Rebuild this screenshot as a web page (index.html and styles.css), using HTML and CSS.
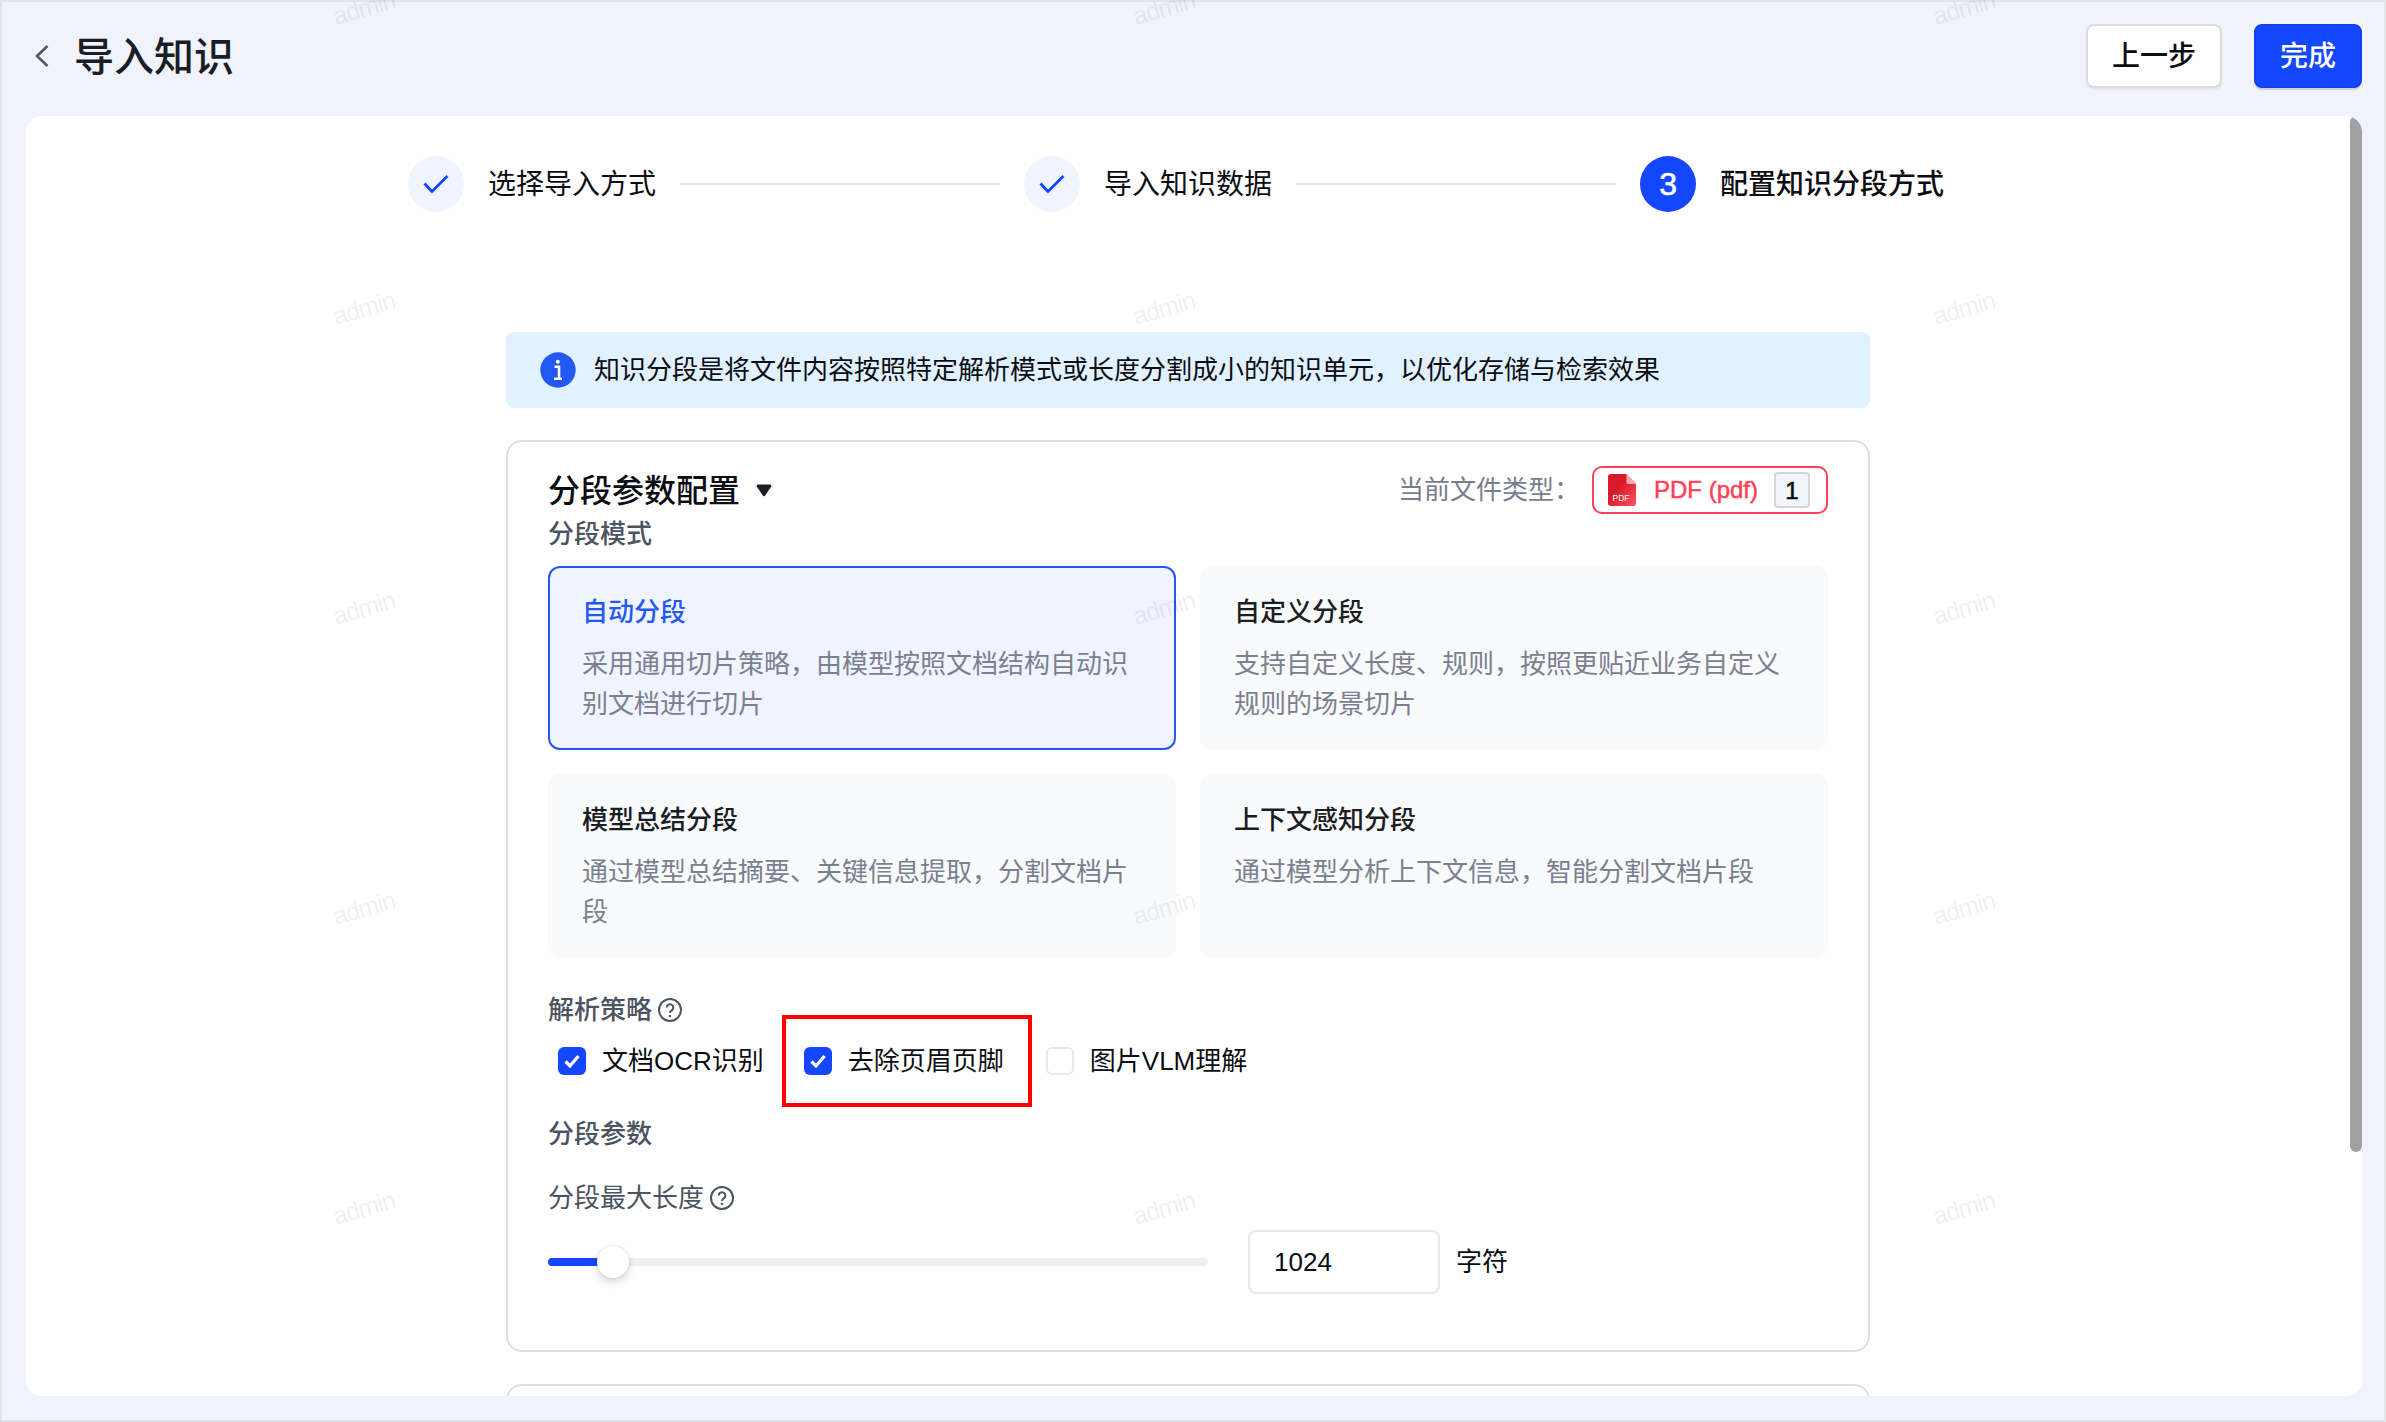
FILE: index.html
```html
<!DOCTYPE html>
<html lang="zh-CN">

<head>
  <meta charset="utf-8">
  <meta name="viewport" content="width=device-width">
  <title>导入知识</title>

  <link rel="stylesheet" href="styles.css">
</head>

<body>
  <div class="page">
    <header class="header">
      <svg class="back" viewBox="0 0 14 22"><path d="M12.500 1L2 11l10.500 10" /></svg>
      <h1>导入知识</h1>
      <button class="btn">上一步</button>
      <button class="btn btn-primary">完成</button>
    </header>

    <main class="panel">
      <div class="steps">
        <div class="step-icon done">
          <svg viewBox="0 0 26 20"><path d="M1.500 9.500L9 17.500 24.500 2" /></svg>
        </div>
        <span class="step-text">选择导入方式</span>
        <div class="step-line"></div>
        <div class="step-icon done">
          <svg viewBox="0 0 26 20"><path d="M1.500 9.500L9 17.500 24.500 2" /></svg>
        </div>
        <span class="step-text">导入知识数据</span>
        <div class="step-line"></div>
        <div class="step-icon active">3</div>
        <span class="step-text current">配置知识分段方式</span>
      </div>

      <div class="content">
        <div class="alert">
          <svg class="info" viewBox="0 0 36 36">
            <circle cx="18" cy="18" r="17.700" fill="#2458f2" />
            <circle cx="17.800" cy="9.700" r="2" fill="#fff" />
            <path d="M14.500 14.800h4.500v12M14 26.800h8" fill="none" stroke="#fff" stroke-width="2.600" />
          </svg>
          知识分段是将文件内容按照特定解析模式或长度分割成小的知识单元&#65292;以优化存储与检索效果
        </div>

        <section class="card">
          <div class="card-head">
            <h2>分段参数配置</h2>
            <svg class="caret" viewBox="0 0 16 13"><path d="M2 .5h12q2 .3 1.200 2L9.200 11.500q-1.200 1.500-2.400 0L.8 2.500Q0 .8 2 .5z" /></svg>
            <span class="type-label">当前文件类型&#65306;</span>
            <div class="file-type">
              <svg class="pdf" viewBox="0 0 28 32">
                <defs>
                  <linearGradient id="pdfRed" x1="0" y1="0" x2="1" y2="1">
                    <stop offset=".4" stop-color="#d91a29" />
                    <stop offset="1" stop-color="#fb5560" />
                  </linearGradient>
                </defs>
                <path d="M3 0h15.500L28 10v19a3 3 0 0 1-3 3H3a3 3 0 0 1-3-3V3a3 3 0 0 1 3-3z" fill="url(#pdfRed)" />
                <path d="M18.500 0L28 10h-8a1.500 1.500 0 0 1-1.500-1.500z" fill="#f7a8ae" />
                <text x="4.500" y="27" font-size="8.500" fill="#fff">PDF</text>
              </svg>
              <span>PDF (pdf)</span>
              <b class="count">1</b>
            </div>
          </div>

          <div class="label">分段模式</div>
          <div class="modes">
            <div class="mode selected">
              <h3>自动分段</h3>
              <p>采用通用切片策略&#65292;由模型按照文档结构自动识别文档进行切片</p>
            </div>
            <div class="mode">
              <h3>自定义分段</h3>
              <p>支持自定义长度、规则&#65292;按照更贴近业务自定义规则的场景切片</p>
            </div>
            <div class="mode">
              <h3>模型总结分段</h3>
              <p>通过模型总结摘要、关键信息提取&#65292;分割文档片段</p>
            </div>
            <div class="mode">
              <h3>上下文感知分段</h3>
              <p>通过模型分析上下文信息&#65292;智能分割文档片段</p>
            </div>
          </div>

          <div class="label strategy">解析策略
            <svg class="help" viewBox="0 0 24 24"><circle cx="12" cy="12" r="11" /><path d="M8.700 9.500a3.300 3.300 0 1 1 5 2.800q-1.700 1-1.700 2.700" /><circle class="dot" cx="12" cy="18" r="1.200" /></svg>
          </div>
          <div class="checks">
            <label class="check">
              <span class="box checked"><svg viewBox="0 0 28 28"><path d="M7.500 14.500l4.500 4.500L20.500 9" /></svg></span>文档OCR识别
            </label>
            <label class="check marked">
              <span class="box checked"><svg viewBox="0 0 28 28"><path d="M7.500 14.500l4.500 4.500L20.500 9" /></svg></span>去除页眉页脚
            </label>
            <label class="check">
              <span class="box"></span>图片VLM理解
            </label>
          </div>

          <div class="label params">分段参数</div>
          <div class="label length">分段最大长度
            <svg class="help" viewBox="0 0 24 24"><circle cx="12" cy="12" r="11" /><path d="M8.700 9.500a3.300 3.300 0 1 1 5 2.800q-1.700 1-1.700 2.700" /><circle class="dot" cx="12" cy="18" r="1.200" /></svg>
          </div>
          <div class="slider-row">
            <div class="slider">
              <div class="bar"></div>
              <div class="thumb"></div>
            </div>
            <input class="number" type="text" value="1024">
            <span>字符</span>
          </div>
        </section>

        <section class="card next"></section>
      </div>
      <div class="scrollbar"></div>
    </main>
  </div>

  <svg class="watermark">
    <defs>
      <pattern id="mark" y="-100" width="800" height="300" patternUnits="userSpaceOnUse">
        <text x="336" y="125" transform="rotate(-16 336 125)">admin</text>
      </pattern>
    </defs>
    <rect width="100%" height="100%" fill="url(#mark)" />
  </svg>
</body>

</html>
```
FILE: styles.css
```css
*,
*::after {
  box-sizing: border-box;
}

html,
body {
  margin: 0;
  padding: 0;
  width: 100%;
  height: 100%;
  overflow: hidden;
}

body {
  font-family: "Liberation Sans", "Noto Sans CJK SC", sans-serif;
  font-size: 26px;
  line-height: 1.5;
  color: #0b0d12;
}

h1,
h2,
h3,
p {
  margin: 0;
  font-weight: 500;
}

svg {
  display: block;
  flex: none;
}

.page {
  height: 100%;
  display: flex;
  flex-direction: column;
  padding: 0 22px 24px 24px;
  background: #f0f3fc;
  border: 2px solid #e3e4e8;
}

.header {
  display: flex;
  align-items: flex-start;
  flex: none;
  height: 114px;
  padding: 22px 0 0 9px;
}

.back {
  width: 14px;
  height: 22px;
  margin-top: 21px;
  fill: none;
  stroke: #4e5565;
  stroke-width: 2.5;
}

.header h1 {
  margin: 1px auto 0 25px;
  font-size: 40px;
  line-height: 64px;
  color: #1a1d24;
}

.btn {
  height: 64px;
  width: 136px;
  padding: 2px 0 0;
  font-family: inherit;
  font-size: 28px;
  font-weight: 500;
  line-height: 56px;
  color: #0b0d12;
  background: #fff;
  border: 2px solid #d9dbdf;
  border-radius: 8px;
  box-shadow: 0 2px 1px rgba(0, 0, 0, 0.05);
}

.btn-primary {
  width: 108px;
  margin-left: 32px;
  color: #fff;
  background: #1447ff;
  border-color: #1440e6;
  box-shadow: 0 2px 1px rgba(0, 0, 0, 0.15);
}

.panel {
  position: relative;
  flex: 1;
  min-height: 0;
  padding-top: 40px;
  background: #fff;
  border-radius: 16px;
  overflow: hidden;
}

.steps {
  display: flex;
  align-items: center;
  height: 56px;
  padding-left: 382px;
  font-size: 28px;
}

.step-icon {
  display: flex;
  align-items: center;
  justify-content: center;
  width: 56px;
  height: 56px;
  margin-right: 24px;
  border-radius: 50%;
}

.step-icon.done {
  background: #f0f4ff;
}

.step-icon svg {
  width: 26px;
  height: 20px;
  fill: none;
  stroke: #1447ff;
  stroke-width: 2.8;
}

.step-icon.active {
  color: #fff;
  font-size: 32px;
  background: #1447ff;
  -webkit-text-stroke: 0.6px #fff;
}

.step-text {
  padding-top: 2px;
}

.step-line {
  width: 320px;
  height: 2px;
  margin: 0 24px;
  background: #e5e8ee;
}

.current {
  font-weight: 500;
}

.content {
  width: 1364px;
  margin: 120px 0 0 480px;
}

.alert {
  display: flex;
  align-items: center;
  height: 76px;
  padding-left: 34px;
  border-radius: 8px;
  background: #e1f1ff;
}

.info {
  width: 36px;
  height: 36px;
  margin-right: 18px;
}

.card {
  height: 912px;
  margin-top: 32px;
  padding: 24px 40px;
  border: 2px solid #dcdfe7;
  border-radius: 16px;
}

.card-head {
  display: flex;
  align-items: center;
  height: 48px;
}

.card-head h2 {
  padding-top: 1px;
  font-size: 32px;
}

.caret {
  width: 16px;
  height: 13px;
  margin-left: 16px;
  fill: #1a1d24;
}

.type-label {
  margin-left: auto;
  width: 194px;
  color: #787e8e;
}

.file-type {
  display: flex;
  align-items: center;
  width: 236px;
  height: 48px;
  padding-left: 14px;
  border: 2px solid #ff4057;
  border-radius: 10px;
  color: #ff4057;
  font-size: 24px;
  -webkit-text-stroke: 0.5px #ff4057;
}

.pdf {
  width: 28px;
  height: 32px;
  margin-right: 18px;
  -webkit-text-stroke: 0;
}

.count {
  width: 36px;
  height: 36px;
  margin-left: 16px;
  border: 2px solid #d3d5da;
  border-radius: 4px;
  background: #f3f4f9;
  color: #0b0d12;
  font-weight: 400;
  line-height: 33px;
  text-align: center;
  -webkit-text-stroke: 0.6px #0b0d12;
}

.label {
  display: flex;
  align-items: center;
  height: 40px;
  color: #4c5361;
  font-weight: 500;
}

.modes {
  display: grid;
  grid-template-columns: 1fr 1fr;
  gap: 24px;
  margin-top: 12px;
}

.mode {
  height: 184px;
  padding: 24px 32px;
  border: 2px solid #f9fafc;
  border-radius: 12px;
  background: #f9fafc;
}

.mode h3 {
  font-size: 26px;
  line-height: 40px;
  color: #1a1d24;
}

.mode p {
  margin-top: 12px;
  font-weight: 400;
  line-height: 40px;
  color: #7b8090;
}

.mode.selected {
  border-color: #2458f2;
  background: #f0f4ff;
}

.selected h3 {
  color: #2458f2;
}

.strategy {
  margin-top: 32px;
}

.help {
  width: 24px;
  height: 24px;
  margin-left: 6px;
  fill: none;
  stroke: #4c5361;
  stroke-width: 2;
}

.help .dot {
  fill: #4c5361;
  stroke: none;
}

.checks {
  display: flex;
  align-items: center;
  height: 62px;
  padding-left: 10px;
}

.check {
  position: relative;
  display: flex;
  align-items: center;
  height: 40px;
}

.check + .check {
  margin-left: 40px;
}

.check.marked + .check {
  margin-left: 42px;
}

.box {
  width: 28px;
  height: 28px;
  margin-right: 16px;
  border: 2px solid #e5e8ee;
  border-radius: 6px;
}

.box.checked {
  border: 0;
  background: #1447ff;
}

.box path {
  fill: none;
  stroke: #fff;
  stroke-width: 3.2;
}

/* highlight frame around the option */
.marked::after {
  content: "";
  position: absolute;
  top: -26px;
  left: -22px;
  width: 250px;
  height: 92px;
  border: 4px solid #ff0000;
}

.params {
  margin-top: 22px;
}

.length {
  margin-top: 24px;
  font-weight: 400;
}

.slider-row {
  display: flex;
  align-items: center;
  height: 64px;
  margin-top: 12px;
}

.slider {
  position: relative;
  width: 660px;
  height: 8px;
  margin-right: 40px;
  border-radius: 4px;
  background: #eeeff3;
}

.bar {
  width: 65px;
  height: 8px;
  border-radius: 4px;
  background: #1447ff;
}

.thumb {
  position: absolute;
  top: -12px;
  left: 49px;
  width: 32px;
  height: 32px;
  border-radius: 50%;
  background: #fff;
  box-shadow: 0 4px 8px rgba(0, 0, 0, 0.16), 0 0 2px rgba(0, 0, 0, 0.16);
}

.number {
  width: 192px;
  height: 64px;
  margin-right: 16px;
  padding: 0 24px;
  border: 2px solid #e5e8ee;
  border-radius: 8px;
  font-family: inherit;
  font-size: 26px;
  color: #0b0d12;
}

.scrollbar {
  position: absolute;
  top: 0;
  right: 0;
  width: 12px;
  height: 1036px;
  border-radius: 6px;
  background: #a1a1a1;
}

.watermark {
  position: fixed;
  inset: 0;
  width: 100%;
  height: 100%;
  pointer-events: none;
}

.watermark text {
  font-size: 25px;
  letter-spacing: -1px;
  fill: rgba(0, 0, 0, 0.06);
}
```
